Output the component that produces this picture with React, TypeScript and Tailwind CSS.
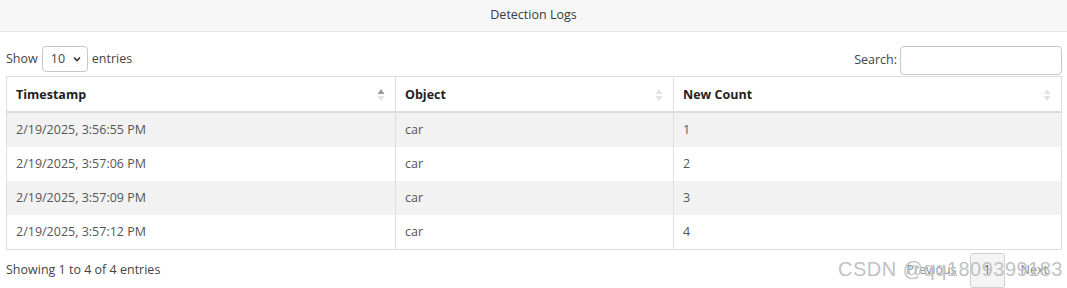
import React from "react";

const rows = [
  ["2/19/2025, 3:56:55 PM", "car", "1"],
  ["2/19/2025, 3:57:06 PM", "car", "2"],
  ["2/19/2025, 3:57:09 PM", "car", "3"],
  ["2/19/2025, 3:57:12 PM", "car", "4"],
];

function SortIcon({ active }: { active?: boolean }) {
  return (
    <svg width="8" height="14" viewBox="0 0 8 14" className="shrink-0">
      <path d="M4 1 L7.5 6 L0.5 6 Z" fill={active ? "#9a9a9a" : "#e3e3e3"} />
      <path d="M4 13 L7.5 8 L0.5 8 Z" fill="#e3e3e3" />
    </svg>
  );
}

export default function App() {
  return (
    <div
      className="relative w-[1067px] h-[288px] bg-white text-[#333] overflow-hidden"
      style={{ fontFamily: '"Open Sans", "Noto Sans", sans-serif' }}
    >
      <div className="h-[32px] bg-[#f7f7f7] border-b border-[#e4e4e4] flex items-center justify-center text-[12.5px] text-[#3a3a3a]">
        Detection Logs
      </div>
      <div className="pl-[6px] pr-[5px]">
        <div className="flex items-end justify-between h-[44px] pb-[1px]">
          <div className="flex items-center gap-[4px] text-[12.5px] text-[#444] mb-[3px]">
            <span>Show</span>
            <div className="w-[46px] h-[26px] border border-[#c8c8c8] rounded-[4px] flex items-center justify-between pl-[8px] pr-[6px]">
              <span>10</span>
              <svg width="8" height="6" viewBox="0 0 8 6">
                <path d="M1 1.5 L4 4.5 L7 1.5" stroke="#333" strokeWidth="1.6" fill="none" />
              </svg>
            </div>
            <span>entries</span>
          </div>
          <div className="flex items-center gap-[3px] text-[12.5px] text-[#444]">
            <span>Search:</span>
            <div className="w-[162px] h-[29px] border border-[#c8c8c8] rounded-[4px] bg-white" />
          </div>
        </div>
        <div className="border border-[#dedede]">
          <div className="grid grid-cols-[389px_278px_1fr] h-[36px] border-b-2 border-[#dcdcdc] text-[12.5px] font-bold text-[#222]">
            <div className="flex items-center justify-between pl-[9px] pr-[10px] pt-[2px] border-r border-[#dedede]">
              <span>Timestamp</span>
              <SortIcon active />
            </div>
            <div className="flex items-center justify-between pl-[9px] pr-[10px] pt-[2px] border-r border-[#dedede]">
              <span>Object</span>
              <SortIcon />
            </div>
            <div className="flex items-center justify-between pl-[9px] pr-[10px] pt-[2px]">
              <span>New Count</span>
              <SortIcon />
            </div>
          </div>
          {rows.map((r, i) => (
            <div
              key={i}
              className={`grid grid-cols-[389px_278px_1fr] h-[34px] text-[12.5px] text-[#555] ${
                i % 2 === 0 ? "bg-[#f2f2f2]" : "bg-white"
              }`}
            >
              <div className="flex items-center pl-[9px] pt-[1px] border-r border-[#dedede]">{r[0]}</div>
              <div className="flex items-center pl-[9px] pt-[1px] border-r border-[#dedede]">{r[1]}</div>
              <div className="flex items-center pl-[9px] pt-[1px]">{r[2]}</div>
            </div>
          ))}
        </div>
        <div className="flex items-center justify-between h-[40px] text-[12.5px] text-[#444]">
          <span>Showing 1 to 4 of 4 entries</span>
          <div className="flex items-center text-[#888] mr-[-2px]">
            <span className="px-[13px]">Previous</span>
            <div className="w-[35px] h-[35px] border border-[#cfcfcf] rounded-[3px] bg-[#f4f4f4] flex items-center justify-center text-[#555]">
              1
            </div>
            <span className="px-[16px]">Next</span>
          </div>
        </div>
      </div>
      <div
        className="absolute right-[4px] top-[257px] text-[20px] leading-[24px] text-[#c2c2c2] tracking-[0.5px]"
        style={{ fontFamily: '"Liberation Sans", Arial, sans-serif' }}
      >
        CSDN @qq1809399183
      </div>
    </div>
  );
}
